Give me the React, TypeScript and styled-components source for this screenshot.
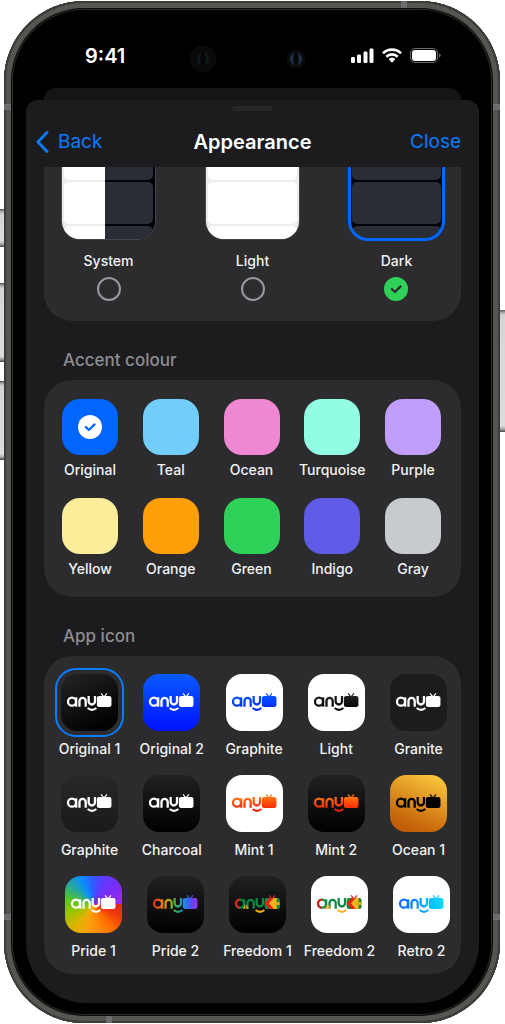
import React, { useId } from 'react';
import styled, { createGlobalStyle, css } from 'styled-components';

const GlobalStyle = createGlobalStyle`
  * { box-sizing: border-box; }
  body {
    margin: 0;
    background: #fff;
    font-family: Inter, "Liberation Sans", sans-serif;
    -webkit-font-smoothing: antialiased;
  }
  fieldset { border: 0; margin: 0; padding: 0; min-width: 0; }
`;

const Page = styled.main`
  padding: 1px 5px 1px 4px;
  overflow: hidden;
`;

const Phone = styled.div`
  position: relative;
  padding: 0 21px 20px 22px;
  border-radius: 80px;
  background: #000;
  box-shadow:
    inset 0 0 0 2px #3d3c39,
    inset 0 0 0 7px #575552,
    inset 0 0 0 8px #0c0b0a,
    inset 0 0 0 9px #2b2825;
`;

const SideButton = styled.span<{ $side: 'left' | 'right'; $top: number; $height: number }>`
  position: absolute;
  ${p => p.$side}: -5px;
  top: ${p => p.$top}px;
  width: 5px;
  height: ${p => p.$height}px;
  background: linear-gradient(#555 0, #b5b5b5 3px, #d6d6d6 6px, #dcdcdc calc(100% - 6px), #aaa calc(100% - 3px), #444 100%);
`;

const Antenna = styled.span<{ $edge: 'left' | 'right' | 'top' | 'bottom'; $at: string }>`
  position: absolute;
  background: #6d6d70;
  ${p => p.$edge}: 0;
  ${p =>
    p.$edge === 'left' || p.$edge === 'right'
      ? css`width: 7px; height: 6px; top: ${p.$at};`
      : css`width: 6px; height: 7px; left: ${p.$at};`}
`;

const StatusBar = styled.header`
  position: relative;
  display: flex;
  align-items: center;
  justify-content: space-between;
  height: 87px;
  padding: 22px 38px 0 59px;
  color: #fff;
`;

const Clock = styled.time`
  font-size: 20px;
  font-weight: 600;
`;

const Indicators = styled.div`
  display: flex;
  align-items: center;
  gap: 8px;
`;

const Sensor = styled.span<{ $left: string; $size: number; $tint: string }>`
  position: absolute;
  left: ${p => p.$left};
  top: 58px;
  width: ${p => p.$size}px;
  height: ${p => p.$size}px;
  transform: translate(-50%, -50%);
  border-radius: 50%;
  background: radial-gradient(ellipse 3px 8px at 50% 50%, #060607 80%, transparent 100%),
    radial-gradient(circle at 50% 50%, ${p => p.$tint} 0 5px, #0a0a0b 7px);
`;

const BackSheet = styled.div`
  height: 12px;
  margin: 0 18px;
  border-radius: 12px 12px 0 0;
  background: #141615;
`;

const Sheet = styled.section`
  padding: 6px 18px 29px;
  border-radius: 12px 12px 60px 60px;
  background: #1c1c1e;
`;

const Grabber = styled.div`
  width: 41px;
  height: 5px;
  margin: 0 auto;
  border-radius: 3px;
  background: #28282a;
`;

const NavBar = styled.nav`
  display: grid;
  grid-template-columns: 1fr auto 1fr;
  align-items: center;
  height: 56px;
  padding-top: 5px;
`;

const Title = styled.h1`
  margin: 0;
  color: #fff;
  font-size: 20px;
  font-weight: 600;
  line-height: 24px;
`;

const NavButton = styled.button<{ $end?: boolean }>`
  display: flex;
  align-items: center;
  justify-self: ${p => (p.$end ? 'end' : 'start')};
  gap: 9px;
  margin-left: -8px;
  padding: 0;
  border: 0;
  background: none;
  color: #0a7cff;
  font: 400 19px/24px Inter, sans-serif;
  cursor: pointer;
`;

const Panel = styled.fieldset<{ $clipped?: boolean }>`
  border-radius: ${p => (p.$clipped ? '0 0 28px 28px' : '28px')};
  background: #2c2c2e;
`;

const ThemePanel = styled(Panel)`
  display: flex;
  justify-content: space-between;
  padding: 0 18px 20px;
`;

const SwatchPanel = styled(Panel)`
  display: grid;
  grid-template-columns: repeat(5, 56px);
  justify-content: space-between;
  row-gap: 18px;
  padding: 19px 20px 18px 18px;
`;

const IconPanel = styled(Panel)`
  display: flex;
  flex-direction: column;
  gap: 16px;
  padding: 18px 14px 13px 17px;
`;

const IconRow = styled.div<{ $shift?: boolean }>`
  display: grid;
  grid-template-columns: repeat(5, 57px);
  justify-content: space-between;
  margin: ${p => (p.$shift ? '0 -3px 0 4px' : '0')};
`;

const SectionTitle = styled.h2`
  margin: 27px 19px 8px;
  color: #8d8d92;
  font-size: 17px;
  font-weight: 500;
  line-height: 24px;
`;

const Option = styled.label<{ $gap: number }>`
  display: flex;
  flex-direction: column;
  align-items: center;
  gap: ${p => p.$gap}px;
  cursor: pointer;
`;

const Caption = styled.span`
  color: #f2f2f3;
  font-size: 14px;
  font-weight: 500;
  line-height: 20px;
  white-space: nowrap;
`;

type Tone = 'system' | 'light' | 'dark';

const frameFill = {
  system: 'linear-gradient(90deg, #ededed 43px, #000208 43px)',
  light: '#ededed',
  dark: '#000208',
};
const cardFill = {
  system: 'linear-gradient(90deg, #fff 41px, #2b2d36 41px)',
  light: '#fff',
  dark: '#2b2d36',
};

const Preview = styled.span<{ $tone: Tone }>`
  display: flex;
  flex-direction: column;
  gap: 2px;
  width: 93px;
  height: 72px;
  padding: 0 2px;
  overflow: hidden;
  border-radius: 0 0 18px 18px;
  background: ${p => frameFill[p.$tone]};
  box-shadow: ${p => (p.$tone === 'dark' ? 'none' : '0 0 0 1px #44454a')};
  clip-path: inset(0 -1px -1px -1px);
`;

const PreviewFrame = styled.span<{ $selected: boolean }>`
  position: relative;
  display: block;
  ${p =>
    p.$selected &&
    css`
      &::after {
        content: '';
        position: absolute;
        inset: 0 -2px -2px;
        border: 3px solid #0066ff;
        border-top: 0;
        border-radius: 0 0 20px 20px;
      }
    `}
`;

const PreviewCard = styled.span<{ $tone: Tone; $part: 'top' | 'middle' | 'bottom' }>`
  flex: none;
  height: ${p => ({ top: 13, middle: 42, bottom: 13 })[p.$part]}px;
  border-radius: ${p => ({ top: '0 0 5px 5px', middle: '5px', bottom: '5px 5px 0 0' })[p.$part]};
  background: ${p => cardFill[p.$tone]};
`;

const ThemeChoice = styled.span`
  display: flex;
  flex-direction: column;
  align-items: center;
  gap: 6px;
`;

const RadioWrap = styled.span`
  position: relative;
  display: block;
  height: 24px;
`;

const RoundRadio = styled.input`
  appearance: none;
  display: block;
  width: 24px;
  height: 24px;
  margin: 0;
  border: 2px solid #98989c;
  border-radius: 50%;
  & + svg { display: none; }
  &:checked { border-color: #30d158; background: #30d158; }
  &:checked + svg { display: block; position: absolute; inset: 0; pointer-events: none; }
`;

const SwatchRadio = styled.input<{ $color: string }>`
  appearance: none;
  display: block;
  width: 56px;
  height: 56px;
  margin: 0;
  border-radius: 18px;
  background: ${p => p.$color};
  & + svg { display: none; }
  &:checked + svg { display: block; position: absolute; top: 16px; left: 16px; pointer-events: none; }
`;

const SwatchWrap = styled.span`
  position: relative;
  display: block;
`;

const IconTile = styled.span<{ $fill: string }>`
  position: relative;
  display: block;
  width: 57px;
  height: 57px;
  border-radius: 16px;
  background: ${p => p.$fill};
`;

const IconRadio = styled.input`
  appearance: none;
  position: absolute;
  inset: -6px;
  margin: 0;
  border: 2px solid transparent;
  border-radius: 21px;
  &:checked { border-color: #0a7cff; }
`;

function CheckMark({ disc, mark }: { disc?: string; mark: string }) {
  return (
    <svg width="24" height="24" viewBox="0 0 24 24" fill="none" aria-hidden="true">
      {disc && <circle cx="12" cy="12" r="12" fill={disc} />}
      <path d="M7.9 12.1 L10.9 15 L16.6 9.4" stroke={mark} strokeWidth="2.2" strokeLinecap="round" strokeLinejoin="round" />
    </svg>
  );
}

type Ink = { stops: string[]; vertical?: boolean; flag?: boolean };

function Logo({ ink }: { ink: Ink }) {
  const id = 'ink' + useId().replace(/[^a-zA-Z0-9]/g, '');
  const paint = `url(#${id})`;
  const n = ink.stops.length;
  const end = ink.vertical ? { x1: 0, y1: 60, x2: 0, y2: 108 } : { x1: 18, y1: 0, x2: 152, y2: 0 };
  return (
    <svg width="57" height="57" viewBox="0 0 171 171" fill="none" aria-hidden="true">
      <defs>
        <linearGradient id={id} gradientUnits="userSpaceOnUse" {...end}>
          {ink.stops.map((c, i) => (
            <stop key={i} offset={n > 1 ? i / (n - 1) : 0} stopColor={c} />
          ))}
        </linearGradient>
        <clipPath id={id + 'tv'}>
          <rect x="107" y="66" width="45" height="33" rx="8" />
        </clipPath>
      </defs>
      <g stroke={ink.flag ? '#0a8a43' : paint} strokeWidth="6.8">
        <circle cx="33" cy="83" r="12" />
        <path d="M45.500 70 V98" />
        <path d="M55.500 98 V81 a9.300 9.300 0 0 1 18.600 0 V98" />
        <path d="M83 66 V82 a9.500 9.500 0 0 0 19 0 V66" />
      </g>
      {ink.flag && (
        <g>
          <path d="M33 71 a12 12 0 0 0 0 24" stroke="#e2231a" strokeWidth="6.8" />
          <path d="M42 98 L49 84 V98 Z" fill="#f9b11c" />
          <path d="M52 98 V84 L59 98 Z" fill="#f9b11c" />
        </g>
      )}
      <path d="M80 102 Q93 113 106 102" stroke={ink.flag ? '#f9b11c' : paint} strokeWidth="6.5" />
      <path d="M120 58 L128 68 M138 58 L130 68" stroke={ink.flag ? '#e2231a' : paint} strokeWidth="3.5" />
      <g clipPath={`url(#${id}tv)`}>
        <rect x="107" y="66" width="45" height="33" fill={ink.flag ? '#f9b11c' : paint} />
        {ink.flag && (
          <>
            <path d="M104 66 H122 L108 82 L124 99 H104 Z" fill="#0a8a43" />
            <path d="M121 66 H134 L120 82 L134 99 H121 L107 82 Z" fill="#e2231a" />
            <rect x="143" y="66" width="9" height="33" fill="#0a8a43" />
            <rect x="143" y="78" width="9" height="9" fill="#d7b51c" />
          </>
        )}
      </g>
    </svg>
  );
}

function SignalIcon() {
  return (
    <svg width="23" height="15" viewBox="0 0 23 15" fill="#fff" aria-hidden="true">
      <rect x="0" y="9" width="4" height="6" rx="1.300" />
      <rect x="6" y="6.500" width="4" height="8.500" rx="1.300" />
      <rect x="12.500" y="3.500" width="4" height="11.500" rx="1.300" />
      <rect x="18.500" y="0.500" width="4" height="14.500" rx="1.300" />
    </svg>
  );
}

function WifiIcon() {
  return (
    <svg width="20" height="15" viewBox="0 0 20 15" aria-hidden="true">
      <g fill="none" stroke="#fff" strokeWidth="2.6">
        <path d="M1 5.300 A12.800 12.800 0 0 1 19 5.300" />
        <path d="M4.300 8.700 A8.200 8.200 0 0 1 15.700 8.700" />
      </g>
      <path d="M6.600 11.100 A5 5 0 0 1 13.400 11.100 L10 14.700 Z" fill="#fff" />
    </svg>
  );
}

function BatteryIcon() {
  return (
    <svg width="31" height="15" viewBox="0 0 31 15" aria-hidden="true">
      <rect x="0.500" y="0.500" width="27" height="14" rx="4.500" fill="none" stroke="#6b6b6d" />
      <rect x="2" y="2" width="24" height="11" rx="3" fill="#fff" />
      <path d="M29 5.200 q1.700 .8 1.700 2.300 t-1.700 2.300 Z" fill="#6b6b6d" />
    </svg>
  );
}

const themes: { name: string; tone: Tone }[] = [
  { name: 'System', tone: 'system' },
  { name: 'Light', tone: 'light' },
  { name: 'Dark', tone: 'dark' },
];

const accents = [
  ['Original', '#0066ff'],
  ['Teal', '#72cdfb'],
  ['Ocean', '#f087d2'],
  ['Turquoise', '#92fde2'],
  ['Purple', '#c19efb'],
  ['Yellow', '#fbed99'],
  ['Orange', '#ff9f0a'],
  ['Green', '#30d158'],
  ['Indigo', '#5e5ce6'],
  ['Gray', '#c7cbd0'],
];

const charcoal = 'linear-gradient(#202123, #000)';
const pride =
  'conic-gradient(from 90deg at 50% 50%, #e0261c 0deg, #f03a0c 25deg, #ff6a00 50deg, #ff8c0a 80deg, #f9a10c 105deg, #dfb400 130deg, #9cc400 160deg, #5cc81e 190deg, #25a8a0 220deg, #0a8cff 245deg, #2a62ff 265deg, #5a3cff 290deg, #7a2cf8 320deg, #9d2bea 360deg)';
const white: Ink = { stops: ['#fff'] };
const fire: Ink = { stops: ['#ff8412', '#ff4a08', '#e81e10'], vertical: true };
const freedom: Ink = { stops: ['#0a8a43'], flag: true };

const iconRows: { name: string; fill: string; ink: Ink }[][] = [
  [
    { name: 'Original 1', fill: 'linear-gradient(150deg, #232426, #000 90%)', ink: white },
    { name: 'Original 2', fill: 'linear-gradient(#0a5cff, #0012ff)', ink: white },
    { name: 'Graphite', fill: '#fff', ink: { stops: ['#0a5cff', '#0022ff'], vertical: true } },
    { name: 'Light', fill: '#fff', ink: { stops: ['#262626', '#000'], vertical: true } },
    { name: 'Granite', fill: '#1c1c1d', ink: white },
  ],
  [
    { name: 'Graphite', fill: 'linear-gradient(#26282a, #191a1b)', ink: white },
    { name: 'Charcoal', fill: charcoal, ink: white },
    { name: 'Mint 1', fill: '#fff', ink: fire },
    { name: 'Mint 2', fill: charcoal, ink: fire },
    { name: 'Ocean 1', fill: 'linear-gradient(205deg, #ffd040, #c9690c 75%, #b8540a)', ink: { stops: ['#000'] } },
  ],
  [
    { name: 'Pride 1', fill: pride, ink: white },
    {
      name: 'Pride 2',
      fill: charcoal,
      ink: { stops: ['#e8281c', '#f06a14', '#c8a810', '#3cb43c', '#1496e0', '#4a50f0', '#a030e8'] },
    },
    { name: 'Freedom 1', fill: charcoal, ink: freedom },
    { name: 'Freedom 2', fill: '#fff', ink: freedom },
    { name: 'Retro 2', fill: '#fff', ink: { stops: ['#1a62ff', '#0a86ff', '#0abcff', '#10dcf8'] } },
  ],
];

export default function App() {
  return (
    <Page>
      <GlobalStyle />
      <Phone>
        <SideButton $side="left" $top={208} $height={38} />
        <SideButton $side="left" $top={282} $height={79} />
        <SideButton $side="left" $top={380} $height={79} />
        <SideButton $side="right" $top={309} $height={122} />
        <Antenna $edge="top" $at="80%" />
        <Antenna $edge="left" $at="103px" />
        <Antenna $edge="right" $at="103px" />
        <Antenna $edge="left" $at="calc(100% - 109px)" />
        <Antenna $edge="right" $at="calc(100% - 109px)" />
        <Antenna $edge="bottom" $at="20.5%" />

        <StatusBar>
          <Clock>9:41</Clock>
          <Sensor $left="39%" $size={27} $tint="#10191e" />
          <Sensor $left="59.500%" $size={19} $tint="#1d3347" />
          <Indicators>
            <SignalIcon />
            <WifiIcon />
            <BatteryIcon />
          </Indicators>
        </StatusBar>

        <BackSheet />
        <Sheet>
          <Grabber />
          <NavBar>
            <NavButton type="button">
              <svg width="13" height="22" viewBox="0 0 13 22" fill="none" aria-hidden="true">
                <path d="M11 1.500 L2 11 L11 20.500" stroke="#0a7cff" strokeWidth="2.800" strokeLinecap="round" strokeLinejoin="round" />
              </svg>
              Back
            </NavButton>
            <Title>Appearance</Title>
            <NavButton type="button" $end>
              Close
            </NavButton>
          </NavBar>

          <ThemePanel $clipped aria-label="Mode">
            {themes.map(t => (
              <Option key={t.name} $gap={12}>
                <PreviewFrame $selected={t.tone === 'dark'}>
                  <Preview $tone={t.tone}>
                    <PreviewCard $tone={t.tone} $part="top" />
                    <PreviewCard $tone={t.tone} $part="middle" />
                    <PreviewCard $tone={t.tone} $part="bottom" />
                  </Preview>
                </PreviewFrame>
                <ThemeChoice>
                  <Caption>{t.name}</Caption>
                  <RadioWrap>
                    <RoundRadio type="radio" name="theme" defaultChecked={t.tone === 'dark'} />
                    <CheckMark mark="#2c2c2e" />
                  </RadioWrap>
                </ThemeChoice>
              </Option>
            ))}
          </ThemePanel>

          <SectionTitle>Accent colour</SectionTitle>
          <SwatchPanel aria-label="Accent colour">
            {accents.map(([name, color], i) => (
              <Option key={name} $gap={5}>
                <SwatchWrap>
                  <SwatchRadio type="radio" name="accent" $color={color} defaultChecked={i === 0} />
                  <CheckMark disc="#fff" mark={color} />
                </SwatchWrap>
                <Caption>{name}</Caption>
              </Option>
            ))}
          </SwatchPanel>

          <SectionTitle>App icon</SectionTitle>
          <IconPanel aria-label="App icon">
            {iconRows.map((row, r) => (
              <IconRow key={r} $shift={r === 2}>
                {row.map((icon, i) => (
                  <Option key={icon.name} $gap={8}>
                    <IconTile $fill={icon.fill}>
                      <IconRadio type="radio" name="app-icon" defaultChecked={r === 0 && i === 0} />
                      <Logo ink={icon.ink} />
                    </IconTile>
                    <Caption>{icon.name}</Caption>
                  </Option>
                ))}
              </IconRow>
            ))}
          </IconPanel>
        </Sheet>
      </Phone>
    </Page>
  );
}
